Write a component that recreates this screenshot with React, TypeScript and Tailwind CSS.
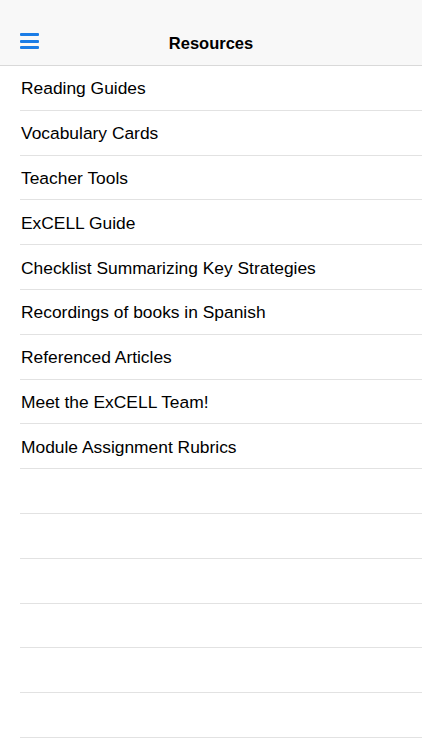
import React from "react";

const items = [
  "Reading Guides",
  "Vocabulary Cards",
  "Teacher Tools",
  "ExCELL Guide",
  "Checklist Summarizing Key Strategies",
  "Recordings of books in Spanish",
  "Referenced Articles",
  "Meet the ExCELL Team!",
  "Module Assignment Rubrics",
  "",
  "",
  "",
  "",
  "",
  "",
];

export default function App() {
  return (
    <div
      className="w-[422px] h-[750px] overflow-hidden bg-white text-black"
      style={{ fontFamily: '"Liberation Sans", Arial, sans-serif' }}
    >
      <header className="relative h-[66px] bg-[#f8f8f8] border-b border-[#d9d9d9] flex items-end justify-center pb-[11px]">
        <button className="absolute left-[20px] top-[33px] flex flex-col gap-[3.5px]" aria-label="menu">
          <span className="block w-[19px] h-[3px] rounded-[1px] bg-[#1a7ce6]" />
          <span className="block w-[19px] h-[3px] rounded-[1px] bg-[#1a7ce6]" />
          <span className="block w-[19px] h-[3px] rounded-[1px] bg-[#1a7ce6]" />
        </button>
        <h1 className="text-[16.5px] font-bold leading-[22px]">Resources</h1>
      </header>
      <ul className="pl-[20px]">
        {items.map((t, i) => (
          <li
            key={i}
            className="h-[44.8px] border-b border-[#e2e2e2] flex items-center pl-[1px] pt-[1px] text-[17.4px]"
          >
            {t}
          </li>
        ))}
      </ul>
    </div>
  );
}
